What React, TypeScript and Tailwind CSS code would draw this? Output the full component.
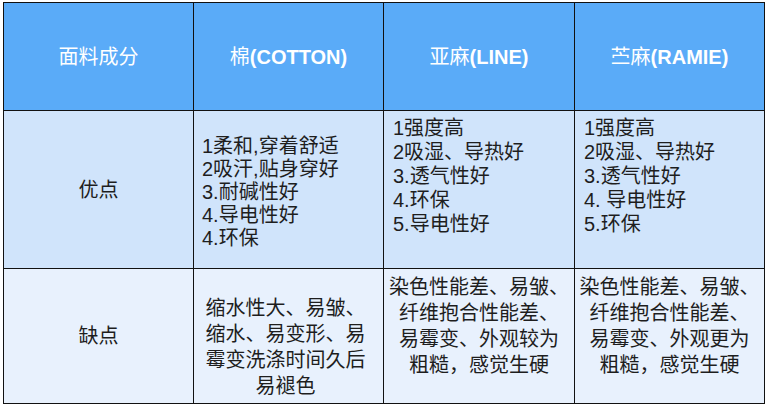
import * as React from "react";

const font = { fontFamily: '"Liberation Sans", "Noto Sans CJK SC", sans-serif' };

function Head({ zh, en }: { zh: string; en?: string }) {
  return (
    <div className="flex items-center justify-center bg-[#5aabf8] text-[20px] text-white">
      <span>{zh}</span>
      {en && <span className="font-bold">{en}</span>}
    </div>
  );
}

function Lines({ lines }: { lines: string[] }) {
  return (
    <>
      {lines.map((l, i) => (
        <div key={i} className="whitespace-nowrap">
          {l}
        </div>
      ))}
    </>
  );
}

export default function App() {
  return (
    <div className="min-h-[407px] bg-white pl-[3px] pt-[2px]" style={font}>
      <div className="grid w-fit grid-cols-[189px_189px_190px_189px] grid-rows-[107px_157px_134px] gap-px bg-[#111] p-px text-[20px] text-[#1e1e1e]">
        <Head zh="面料成分" />
        <Head zh="棉" en="(COTTON)" />
        <Head zh="亚麻" en="(LINE)" />
        <Head zh="苎麻" en="(RAMIE)" />

        <div className="flex items-center justify-center bg-[#d0e4fb]">优点</div>
        <div className="bg-[#d0e4fb] pl-[8px] pt-[24px] leading-[23px]">
          <Lines lines={["1柔和,穿着舒适", "2吸汗,贴身穿好", "3.耐碱性好", "4.导电性好", "4.环保"]} />
        </div>
        <div className="bg-[#d0e4fb] pl-[9px] pt-[5px] leading-[24px]">
          <Lines lines={["1强度高", "2吸湿、导热好", "3.透气性好", "4.环保", "5.导电性好"]} />
        </div>
        <div className="bg-[#d0e4fb] pl-[9px] pt-[5px] leading-[24px]">
          <Lines lines={["1强度高", "2吸湿、导热好", "3.透气性好", "4. 导电性好", "5.环保"]} />
        </div>

        <div className="flex items-center justify-center bg-[#e8f1fd]">缺点</div>
        <div className="bg-[#e8f1fd] pr-[6px] pt-[26px] text-center leading-[26px]">
          <Lines lines={["缩水性大、易皱、", "缩水、易变形、易", "霉变洗涤时间久后", "易褪色"]} />
        </div>
        <div className="bg-[#e8f1fd] pt-[5px] text-center leading-[26px]">
          <Lines lines={["染色性能差、易皱、", "纤维抱合性能差、", "易霉变、外观较为", "粗糙，感觉生硬"]} />
        </div>
        <div className="bg-[#e8f1fd] pt-[5px] text-center leading-[26px]">
          <Lines lines={["染色性能差、易皱、", "纤维抱合性能差、", "易霉变、外观更为", "粗糙，感觉生硬"]} />
        </div>
      </div>
    </div>
  );
}
